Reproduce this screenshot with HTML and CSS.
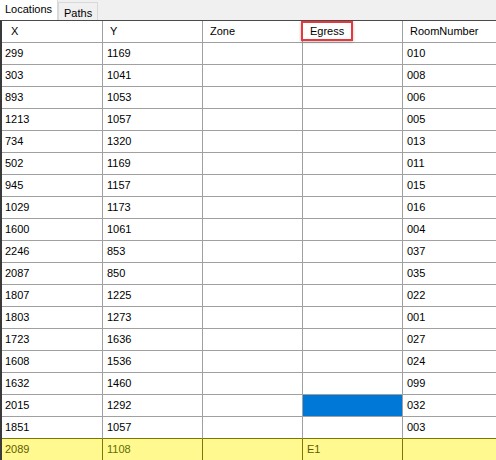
FILE: index.html
```html
<!DOCTYPE html>
<html>
<head>
<meta charset="utf-8">
<link rel="stylesheet" href="styles.css">
</head>
<body>
<div class="tabs">
  <div class="tab active">Locations</div>
  <div class="tab">Paths</div>
</div>
<div class="grid">
  <table>
    <colgroup><col class="c1"><col class="c"><col class="c"><col class="c"><col class="c"></colgroup>
    <thead>
      <tr><th>X</th><th>Y</th><th>Zone</th><th><span class="mark">Egress</span></th><th>RoomNumber</th></tr>
    </thead>
    <tbody>
      <tr><td>299</td><td>1169</td><td></td><td></td><td>010</td></tr>
      <tr><td>303</td><td>1041</td><td></td><td></td><td>008</td></tr>
      <tr><td>893</td><td>1053</td><td></td><td></td><td>006</td></tr>
      <tr><td>1213</td><td>1057</td><td></td><td></td><td>005</td></tr>
      <tr><td>734</td><td>1320</td><td></td><td></td><td>013</td></tr>
      <tr><td>502</td><td>1169</td><td></td><td></td><td>011</td></tr>
      <tr><td>945</td><td>1157</td><td></td><td></td><td>015</td></tr>
      <tr><td>1029</td><td>1173</td><td></td><td></td><td>016</td></tr>
      <tr><td>1600</td><td>1061</td><td></td><td></td><td>004</td></tr>
      <tr><td>2246</td><td>853</td><td></td><td></td><td>037</td></tr>
      <tr><td>2087</td><td>850</td><td></td><td></td><td>035</td></tr>
      <tr><td>1807</td><td>1225</td><td></td><td></td><td>022</td></tr>
      <tr><td>1803</td><td>1273</td><td></td><td></td><td>001</td></tr>
      <tr><td>1723</td><td>1636</td><td></td><td></td><td>027</td></tr>
      <tr><td>1608</td><td>1536</td><td></td><td></td><td>024</td></tr>
      <tr><td>1632</td><td>1460</td><td></td><td></td><td>099</td></tr>
      <tr><td>2015</td><td>1292</td><td></td><td class="sel"></td><td>032</td></tr>
      <tr class="before-new"><td>1851</td><td>1057</td><td></td><td></td><td>003</td></tr>
      <tr class="new"><td>2089</td><td>1108</td><td></td><td>E1</td><td></td></tr>
    </tbody>
  </table>
</div>
</body>
</html>
```
FILE: styles.css
```css
html, body {
  margin: 0;
  padding: 0;
  background: #ffffff;
  overflow: hidden;
}
body {
  width: 496px;
  height: 460px;
  font-family: "Liberation Sans", Arial, sans-serif;
  font-size: 11px;
  color: #000;
}
.tabs {
  display: flex;
  align-items: flex-end;
  height: 20px;
  background: #f0f0f0;
}
.tab {
  box-sizing: border-box;
  height: 18px;
  width: 40px;
  padding: 2px 0 0 5px;
  line-height: 16px;
  font-size: 11px;
  background: #f0f0f0;
  border: 1px solid #d9d9d9;
  border-bottom: none;
}
.tab.active {
  height: 20px;
  width: 58px;
  background: #ffffff;
  border: none;
  border-right: 1px solid #d9d9d9;
  padding: 0 0 0 5px;
  line-height: 18px;
}
.grid {
  height: 440px;
  overflow: hidden;
  border-top: 1px solid #4a4a4a;
  border-left: 2px solid #3a3a3a;
  box-sizing: border-box;
}
table {
  table-layout: fixed;
  border-collapse: separate;
  border-spacing: 0;
  width: 501px;
}
col.c1 { width: 101px; }
col.c { width: 100px; }
th, td {
  box-sizing: border-box;
  height: 22px;
  padding: 0 0 0 4px;
  border-right: 1px solid #a0a0a0;
  border-bottom: 1px solid #a0a0a0;
  text-align: left;
  font-weight: normal;
  white-space: nowrap;
  overflow: hidden;
  line-height: 21px;
}
th {
  padding-left: 7px;
  overflow: visible;
}
th:first-child { padding-left: 9px; }
td:first-child { padding-left: 3px; }
.mark {
  position: relative;
}
.mark::after {
  content: "";
  position: absolute;
  box-sizing: border-box;
  left: -9px;
  top: -4px;
  width: 52px;
  height: 20px;
  border: 2px solid #e8383d;
  box-shadow: 0 1px 3px rgba(0,0,0,0.25);
}
td.sel {
  background: #0078d7;
}
tr.before-new td {
  border-bottom-color: #7d7800;
}
tr.new td {
  background: #fff98f;
  color: #5e5c00;
  border-right-color: #7d7800;
}
tr.new td:nth-child(2) { color: #5d7000; }
```
